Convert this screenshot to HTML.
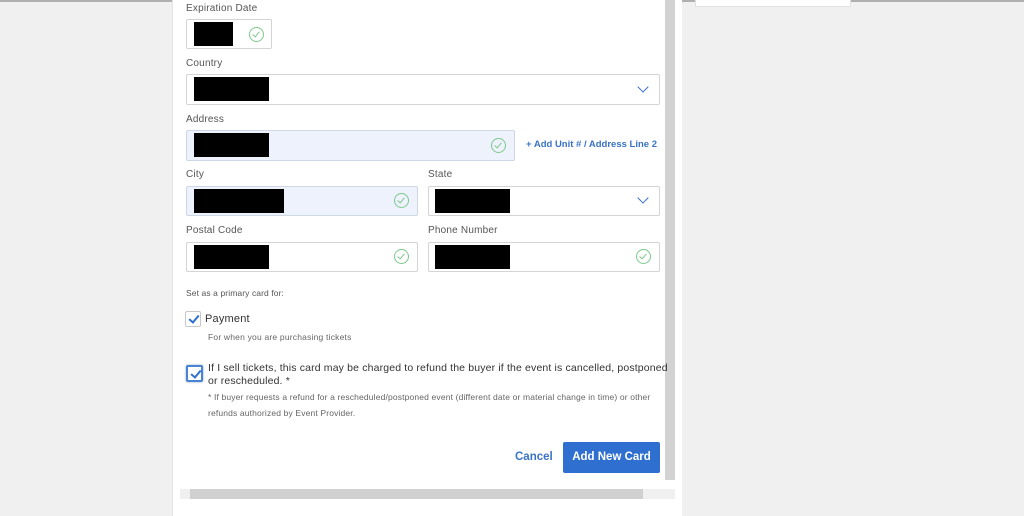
<!DOCTYPE html>
<html><head><meta charset="utf-8"><style>
*{margin:0;padding:0;box-sizing:border-box}
body{width:1024px;height:516px;background:#f0f0f0;position:relative;overflow:hidden;font-family:"Liberation Sans",sans-serif;color:#333}
.a{position:absolute}
.lbl{position:absolute;font-size:10px;color:#555;line-height:12px;letter-spacing:0.2px}
.box{position:absolute;border:1px solid #d4d4d4;background:#fff;border-radius:2px}
.blue{background:#eef2fd;border-color:#cfd6e6}
.blk{position:absolute;background:#000}
.chk{position:absolute;width:15px;height:15px;border:1.3px solid #7dc88a;border-radius:50%}
.chk:after{content:"";position:absolute;left:4px;top:2px;width:3px;height:6px;border-right:1.3px solid #7dc88a;border-bottom:1.3px solid #7dc88a;transform:rotate(40deg)}
.chev{position:absolute;width:8px;height:8px;border-right:1.5px solid #3a73c6;border-bottom:1.5px solid #3a73c6;transform:rotate(45deg)}
.cb{position:absolute;border:1px solid #c8c8c8;background:#fff;border-radius:2px}
.cb:after{content:"";position:absolute;left:5px;top:1px;width:4px;height:8px;border-right:2px solid #2f6fd0;border-bottom:2px solid #2f6fd0;transform:rotate(40deg)}
</style></head><body>
<div class="a" style="left:0;top:0;width:1024px;height:2px;background:#b0b0b0"></div>
<div class="a" style="left:172px;top:0;width:510px;height:516px;background:#fff;border-left:1px solid #e4e4e4"></div>
<div class="a" style="left:695px;top:0;width:156px;height:7px;background:#fff;border:1px solid #e2e2e2;border-top:none"></div>
<div class="a" style="left:665px;top:0;width:10px;height:480px;background:#d2d2d2"></div>
<div class="a" style="left:180px;top:489px;width:495px;height:10px;background:#f0f0f0"></div>
<div class="a" style="left:190px;top:489px;width:453px;height:10px;background:#d0d0d0"></div>

<div class="lbl" style="left:186px;top:3px">Expiration Date</div>
<div class="box" style="left:186px;top:19px;width:86px;height:30px"></div>
<div class="blk" style="left:194px;top:22px;width:39px;height:24px"></div>
<div class="chk" style="left:249px;top:27px"></div>

<div class="lbl" style="left:186px;top:58px">Country</div>
<div class="box" style="left:186px;top:74px;width:474px;height:31px"></div>
<div class="blk" style="left:194px;top:77px;width:75px;height:24px"></div>
<div class="chev" style="left:639px;top:83px"></div>

<div class="lbl" style="left:186px;top:114px">Address</div>
<div class="box blue" style="left:186px;top:130px;width:329px;height:31px"></div>
<div class="blk" style="left:194px;top:133px;width:75px;height:24px"></div>
<div class="chk" style="left:491px;top:138px"></div>
<div class="a" style="left:526px;top:139px;font-size:9.5px;font-weight:bold;color:#3a73c6">+ Add Unit # / Address Line 2</div>

<div class="lbl" style="left:186px;top:169px">City</div>
<div class="box blue" style="left:186px;top:186px;width:232px;height:30px"></div>
<div class="blk" style="left:194px;top:189px;width:90px;height:24px"></div>
<div class="chk" style="left:394px;top:193px"></div>
<div class="lbl" style="left:428px;top:169px">State</div>
<div class="box" style="left:428px;top:186px;width:232px;height:30px"></div>
<div class="blk" style="left:435px;top:189px;width:75px;height:24px"></div>
<div class="chev" style="left:639px;top:194px"></div>

<div class="lbl" style="left:186px;top:225px">Postal Code</div>
<div class="box" style="left:186px;top:242px;width:232px;height:30px"></div>
<div class="blk" style="left:194px;top:245px;width:75px;height:24px"></div>
<div class="chk" style="left:394px;top:249px"></div>
<div class="lbl" style="left:428px;top:225px">Phone Number</div>
<div class="box" style="left:428px;top:242px;width:232px;height:30px"></div>
<div class="blk" style="left:435px;top:245px;width:75px;height:24px"></div>
<div class="chk" style="left:636px;top:249px"></div>

<div class="a" style="left:186px;top:288px;font-size:8.5px;color:#555;letter-spacing:0.1px">Set as a primary card for:</div>
<div class="cb" style="left:185px;top:311px;width:16px;height:16px"></div>
<div class="a" style="left:205px;top:313px;font-size:11px;color:#333;letter-spacing:0.2px">Payment</div>
<div class="a" style="left:208px;top:332px;font-size:8.5px;color:#666;letter-spacing:0.2px">For when you are purchasing tickets</div>

<div class="cb" style="left:186px;top:365px;width:17px;height:17px;border:2px solid #4a82d6;box-shadow:0 0 2px #8ab"></div>
<div class="a" style="left:208px;top:362px;font-size:10.5px;line-height:13px;color:#333;width:470px;white-space:nowrap;letter-spacing:0.15px">If I sell tickets, this card may be charged to refund the buyer if the event is cancelled, postponed<br>or rescheduled. *</div>
<div class="a" style="left:208px;top:389px;font-size:8.5px;line-height:16px;color:#666;width:470px;white-space:nowrap;letter-spacing:0.15px">* If buyer requests a refund for a rescheduled/postponed event (different date or material change in time) or other<br>refunds authorized by Event Provider.</div>

<div class="a" style="left:515px;top:451px;font-size:11.5px;font-weight:bold;color:#3a73c6">Cancel</div>
<div class="a" style="left:563px;top:442px;width:97px;height:31px;background:#2f6fd0;border-radius:2px;color:#fff;font-size:11.5px;font-weight:bold;text-align:center;line-height:31px">Add New Card</div>
</body></html>
